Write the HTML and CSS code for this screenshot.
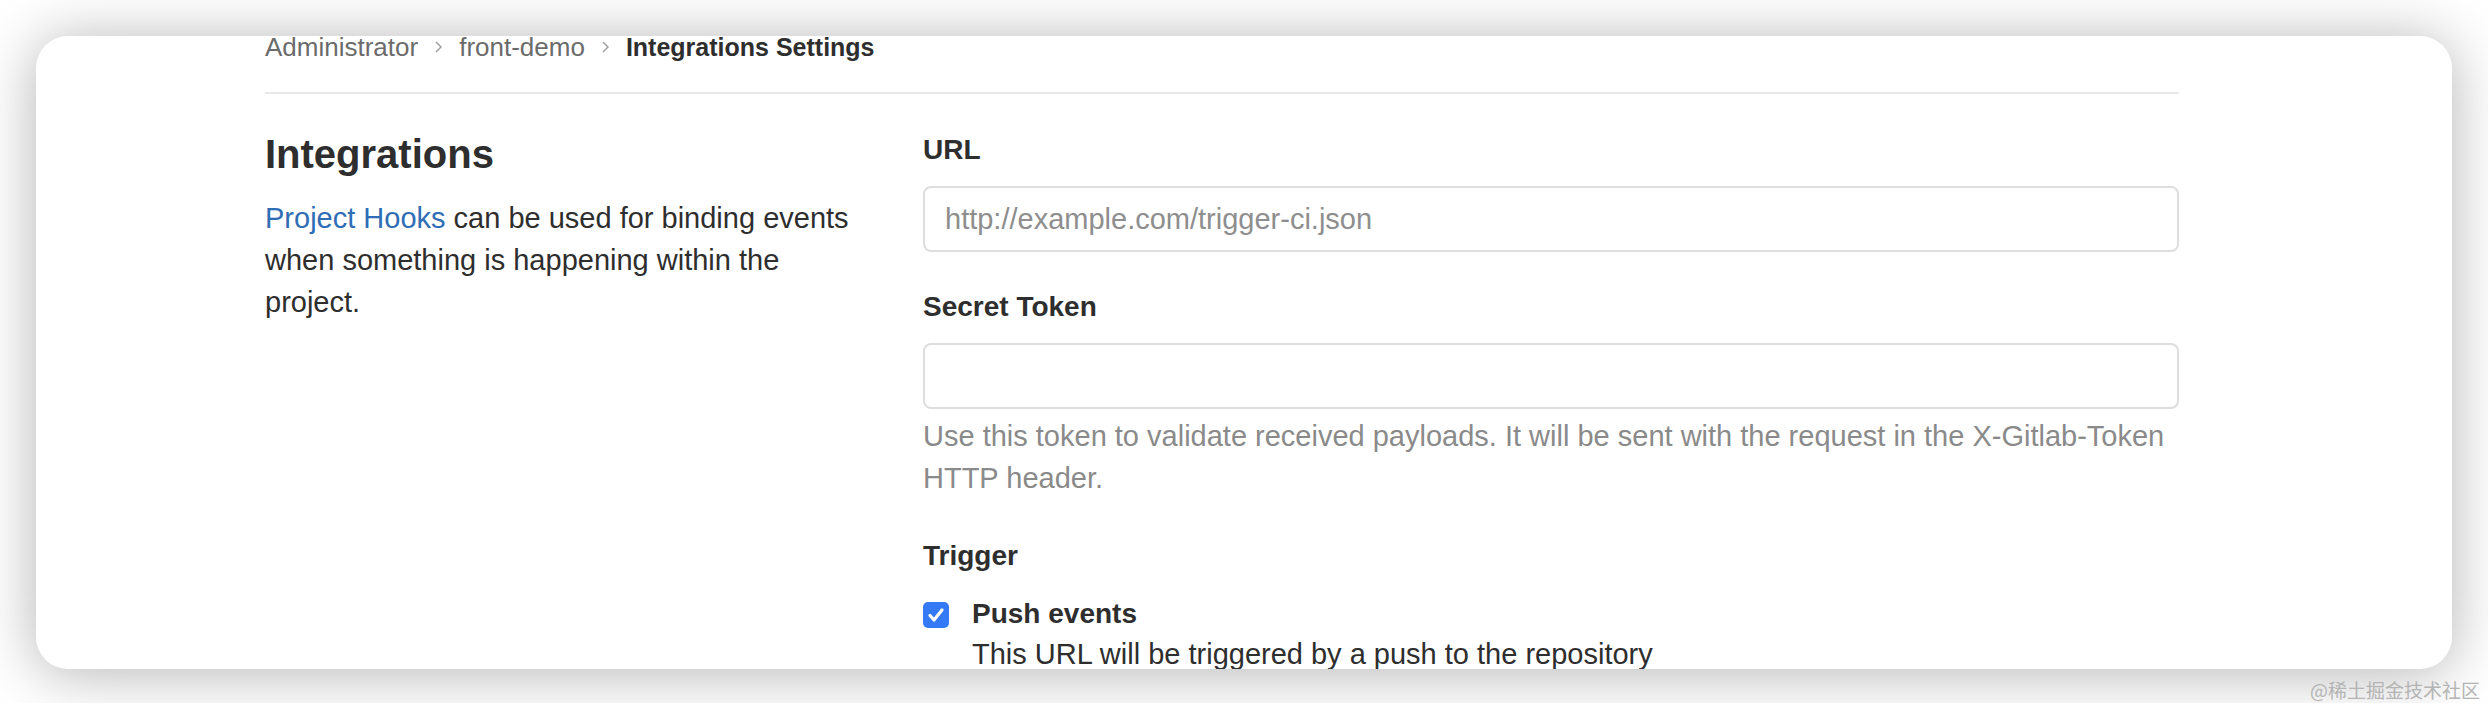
FILE: index.html
```html
<!DOCTYPE html>
<html lang="en">
<head>
  <meta charset="UTF-8">
  <meta name="viewport" content="width=device-width, initial-scale=1.0">
  <title>Integrations Settings</title>
  <link rel="stylesheet" href="styles.css">
</head>
<body>
  <div class="card">
    <div class="content">
      <nav class="breadcrumbs">
        <a href="#">Administrator</a>
        <svg class="chevron" viewBox="0 0 9 14" width="9" height="14"><path d="M2 2l5 5-5 5" fill="none" stroke="#9a9a9a" stroke-width="1.4"/></svg>
        <a href="#">front-demo</a>
        <svg class="chevron" viewBox="0 0 9 14" width="9" height="14"><path d="M2 2l5 5-5 5" fill="none" stroke="#9a9a9a" stroke-width="1.4"/></svg>
        <strong>Integrations Settings</strong>
      </nav>

      <div class="settings">
        <div class="settings-info">
          <h4>Integrations</h4>
          <p><a href="#">Project Hooks</a> can be used for binding events when something is happening within the project.</p>
        </div>

        <form class="settings-form">
          <label class="label" for="hook-url">URL</label>
          <input class="input" id="hook-url" type="text" placeholder="http://example.com/trigger-ci.json">

          <label class="label label-gap" for="hook-token">Secret Token</label>
          <input class="input" id="hook-token" type="text">
          <p class="help">Use this token to validate received payloads. It will be sent with the request in the X-Gitlab-Token HTTP header.</p>

          <div class="label trigger">Trigger</div>
          <div class="check-row">
            <span class="check">
              <svg viewBox="0 0 26 26" width="26" height="26"><path d="M7 13.5l4 4.5 8-10" fill="none" stroke="#fff" stroke-width="3.2" stroke-linecap="round" stroke-linejoin="round"/></svg>
            </span>
            <div>
              <div class="check-title">Push events</div>
              <div class="check-desc">This URL will be triggered by a push to the repository</div>
            </div>
          </div>
        </form>
      </div>
    </div>
  </div>
  <div class="watermark">@稀土掘金技术社区</div>
</body>
</html>
```

FILE: styles.css
```css
* {
  margin: 0;
  padding: 0;
  box-sizing: border-box;
}
body {
  font-family: "Liberation Sans", Arial, sans-serif;
  background-color: #fff;
  color: #2e2e2e;
  padding: 36px 36px 0;
}
.card {
  height: 633px;
  background-color: #fff;
  border-radius: 32px;
  box-shadow: 0 4px 60px rgba(0, 0, 0, 0.3);
  overflow: hidden;
}
.content {
  width: 1914px;
  margin-left: 229px;
}
.breadcrumbs {
  display: flex;
  align-items: center;
  margin-top: -4px;
  padding-bottom: 30px;
  border-bottom: 2px solid #e8e8e8;
  font-size: 26px;
  line-height: 30px;
}
.breadcrumbs a {
  color: #6b6b6b;
  text-decoration: none;
}
.breadcrumbs strong {
  color: #2e2e2e;
  font-size: 25px;
}
.chevron {
  margin: 0 16px;
}
.settings {
  display: grid;
  grid-template-columns: 610px 1256px;
  column-gap: 48px;
  margin-top: 36px;
}
.settings-info h4 {
  font-size: 40px;
  line-height: 48px;
  font-weight: bold;
}
.settings-info p {
  margin-top: 19px;
  font-size: 29px;
  line-height: 42px;
}
.settings-info a {
  color: #2f6db5;
  text-decoration: none;
}
.label {
  display: block;
  font-size: 28px;
  line-height: 40px;
  font-weight: bold;
}
.label-gap {
  margin-top: 35px;
}
.input {
  display: block;
  width: 100%;
  height: 66px;
  margin-top: 16px;
  padding: 0 20px;
  border: 2px solid #dedede;
  border-radius: 8px;
  font-family: "Liberation Sans", Arial, sans-serif;
  font-size: 29px;
  color: #2e2e2e;
  outline: none;
}
.input::placeholder {
  color: #8e8e8e;
}
.help {
  margin-top: 6px;
  font-size: 29px;
  line-height: 42px;
  color: #8a8a8a;
}
.trigger {
  margin-top: 37px;
}
.check-row {
  display: flex;
  gap: 23px;
  margin-top: 18px;
}
.check {
  flex: none;
  width: 26px;
  height: 26px;
  margin-top: 8px;
  border-radius: 5px;
  background-color: #3479f5;
}
.check svg {
  display: block;
}
.check-title {
  font-size: 28px;
  line-height: 40px;
  font-weight: bold;
}
.check-desc {
  font-size: 29px;
  line-height: 40px;
}
.watermark {
  margin: 8px -28px 0 0;
  text-align: right;
  font-family: "Noto Sans CJK SC", sans-serif;
  font-size: 19px;
  line-height: 26px;
  color: #b4b4b4;
}
```
